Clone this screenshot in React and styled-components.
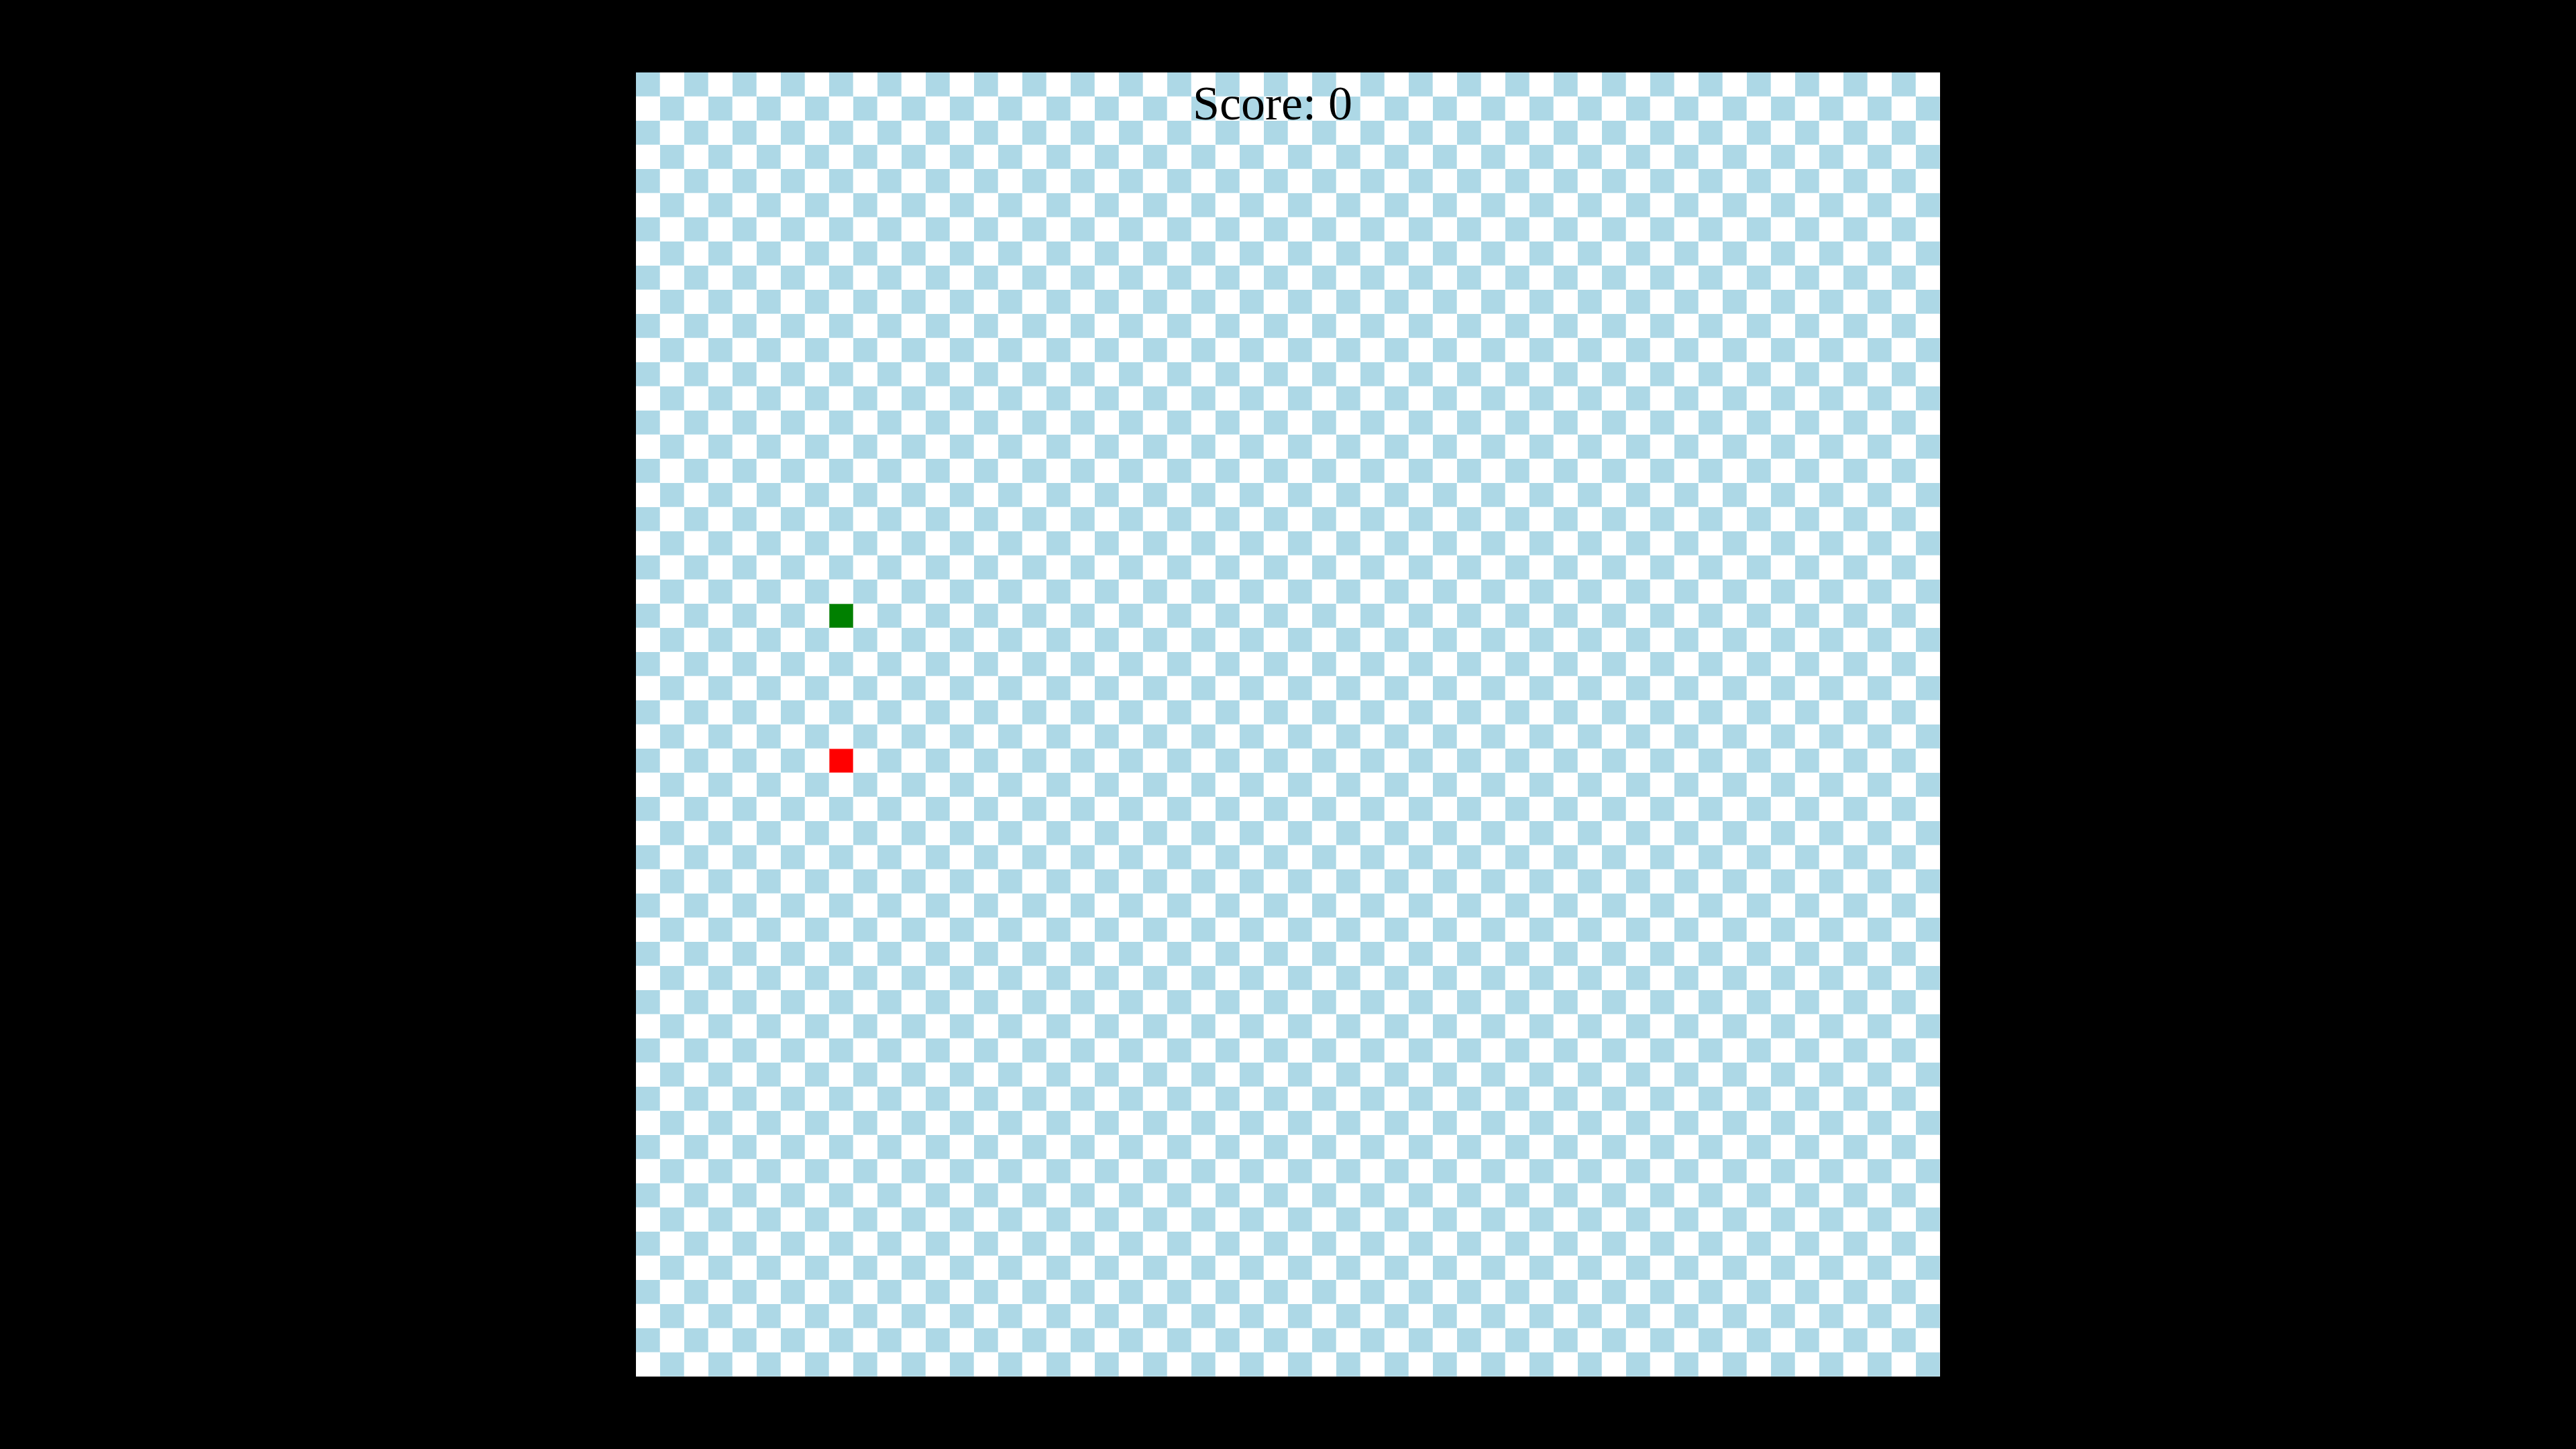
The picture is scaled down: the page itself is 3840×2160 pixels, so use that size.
import React from "react";
import styled, { createGlobalStyle } from "styled-components";

const GRID = 54;
const CELL = 36;
const snake = [{ x: 8, y: 22 }];
const food = { x: 8, y: 28 };

const GlobalStyle = createGlobalStyle`
	html, body {
		margin: 0;
		padding: 0;
		background: #000;
	}
	#root {
		height: 100vh;
	}
`;

const Screen = styled.div`
	width: 100vw;
	height: 100vh;
	display: flex;
	align-items: center;
	justify-content: center;
	background: #000;
`;

const Board = styled.div`
	position: relative;
	display: grid;
	grid-template-columns: repeat(${GRID}, ${CELL}px);
	grid-template-rows: repeat(${GRID}, ${CELL}px);
`;

const Cell = styled.div`
	background: ${(p) =>
		p.$kind === "snake" ? "#008000" : p.$kind === "food" ? "#ff0000" : p.$dark ? "#add8e6" : "#ffffff"};
	box-shadow: ${(p) =>
		p.$kind === "snake"
			? "inset 0 0 0 1px #4aa04a"
			: p.$kind === "food"
			? "inset 0 0 0 1px #ff5a5a"
			: p.$dark
			? "inset -1px -1px 0 #c6e5ee"
			: "none"};
`;

const Score = styled.div`
	position: absolute;
	top: 5px;
	left: 830px;
	font-family: "Liberation Serif", "Times New Roman", serif;
	font-size: 72px;
	color: #000;
	white-space: nowrap;
`;

export default function App() {
	const cells = [];
	for (let y = 0; y < GRID; y++) {
		for (let x = 0; x < GRID; x++) {
			let kind = null;
			if (snake.some((s) => s.x === x && s.y === y)) kind = "snake";
			else if (food.x === x && food.y === y) kind = "food";
			cells.push(<Cell key={`${x}-${y}`} $dark={(x + y) % 2 === 0} $kind={kind} />);
		}
	}

	return (
		<>
			<GlobalStyle />
			<Screen>
				<Board>
					{cells}
					<Score>Score: 0</Score>
				</Board>
			</Screen>
		</>
	);
}
